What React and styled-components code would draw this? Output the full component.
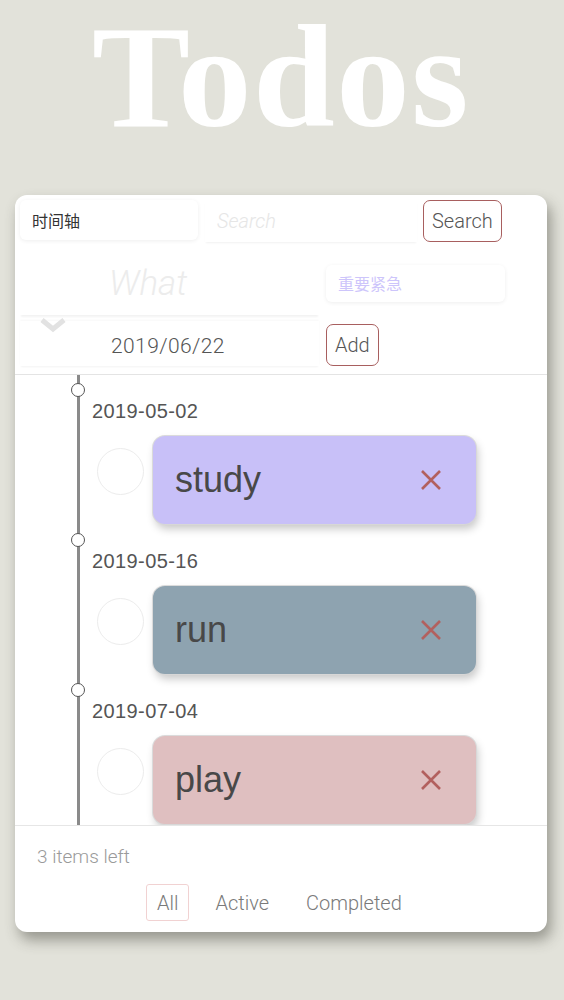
import React from "react";
import styled, { createGlobalStyle } from "styled-components";

const GlobalStyle = createGlobalStyle`
  html, body { margin: 0; padding: 0; }
  body {
    background: #e2e2da;
    font-family: "Liberation Sans", Arial, sans-serif;
  }
  * { box-sizing: border-box; }
`;

const Page = styled.div`
  min-height: 1000px;
  background: #e2e2da;
  padding-top: 1px;
`;

const Title = styled.h1`
  margin: 0;
  height: 194px;
  text-align: center;
  font-family: "Liberation Serif", "Times New Roman", serif;
  font-weight: 700;
  font-size: 147px;
  line-height: 152px;
  letter-spacing: 1.5px;
  color: #ffffff;
  padding-right: 2px;
  white-space: nowrap;
`;

const Card = styled.div`
  margin: 0 17px 0 15px;
  background: #fff;
  border-radius: 12px;
  box-shadow: 4px 8px 14px rgba(60, 60, 50, 0.45);
  overflow: hidden;
`;

const Header = styled.div`
  padding: 5px 0 8px 5px;
  display: flex;
  flex-direction: column;
  gap: 9px;
`;

const TopRow = styled.div`
  display: flex;
  align-items: flex-start;
`;

const SelectBox = styled.div`
  width: 178px;
  height: 40px;
  border-radius: 6px;
  box-shadow: 0 1px 4px rgba(0, 0, 0, 0.07);
  display: flex;
  align-items: center;
  padding-left: 12px;
  font-family: "Noto Sans CJK SC", sans-serif;
  font-size: 16px;
  color: ${(p) => p.$color || "#333"};
`;

const SearchField = styled.div`
  margin-left: 7px;
  width: 212px;
  height: 42px;
  box-shadow: 0 2px 2px -1px rgba(0, 0, 0, 0.06);
  display: flex;
  align-items: center;
  padding-left: 12px;
  font-family: Roboto, "Liberation Sans", sans-serif;
  font-weight: 300;
  font-style: italic;
  font-size: 20px;
  color: #e6e6e6;
`;

const OutlineButton = styled.div`
  margin-left: ${(p) => p.$ml || 0}px;
  height: 42px;
  padding: 0 ${(p) => p.$px || 9}px;
  border: 1px solid #a85f5f;
  border-radius: 7px;
  display: flex;
  align-items: center;
  font-family: Roboto, "Liberation Sans", sans-serif;
  font-weight: 300;
  font-size: 20px;
  color: #555;
`;

const AddGrid = styled.div`
  display: grid;
  grid-template-columns: 299px 1fr;
  grid-template-rows: 64px 45px;
  column-gap: 7px;
  row-gap: 6px;
`;

const WhatField = styled.div`
  box-shadow: 0 3px 2px -1px rgba(0, 0, 0, 0.05);
  display: flex;
  align-items: center;
  padding-left: 89px;
  font-family: Roboto, "Liberation Sans", sans-serif;
  font-weight: 300;
  font-style: italic;
  font-size: 35px;
  color: #ececec;
`;

const PriorityBox = styled(SelectBox)`
  align-self: center;
  width: 179px;
  height: 37px;
  color: #cdc5fb;
  font-size: 16px;
`;

const DateField = styled.div`
  position: relative;
  box-shadow: 0 2px 2px -1px rgba(0, 0, 0, 0.05), 0 -1px 2px rgba(0, 0, 0, 0.03);
  display: flex;
  align-items: flex-end;
  padding: 0 0 8px 91px;
  font-family: Roboto, "Liberation Sans", sans-serif;
  font-weight: 300;
  font-size: 21px;
  letter-spacing: 0.4px;
  color: #555;
`;

const Chevron = styled.svg`
  position: absolute;
  left: 20px;
  top: -4px;
`;

const AddCell = styled.div`
  display: flex;
  align-items: flex-end;
`;

const Divider = styled.div`
  height: 1px;
  background: #e4e4e4;
`;

const Timeline = styled.div`
  position: relative;
  height: 450px;
  overflow: hidden;
  &::before {
    content: "";
    position: absolute;
    left: 62px;
    top: 0;
    bottom: 0;
    width: 2.5px;
    background: #8a8a8a;
  }
`;

const Entry = styled.div`
  position: relative;
  height: 150px;
  padding: 24px 0 0 77px;
`;

const Node = styled.span`
  position: absolute;
  left: 56px;
  top: 8px;
  width: 14px;
  height: 14px;
  border-radius: 50%;
  background: #fff;
  border: 1.5px solid #555;
`;

const DateLabel = styled.div`
  font-family: "Liberation Sans", Arial, sans-serif;
  font-size: 20px;
  letter-spacing: 0.4px;
  line-height: 24px;
  color: #555;
`;

const ItemRow = styled.div`
  margin-top: 13px;
  display: flex;
  align-items: center;
  padding-left: 5px;
`;

const Check = styled.span`
  width: 47px;
  height: 47px;
  border-radius: 50%;
  border: 1px solid #ececec;
  margin-top: -18px;
`;

const TodoCard = styled.div`
  margin-left: 9px;
  width: 323px;
  height: 88px;
  border-radius: 12px;
  background: ${(p) => p.$bg};
  box-shadow: 0 0 0 1px rgba(215, 215, 215, 0.9), 2px 5px 9px rgba(0, 0, 0, 0.22);
  display: flex;
  align-items: center;
  justify-content: space-between;
  padding: 0 34px 0 22px;
  font-family: "Liberation Sans", Arial, sans-serif;
  font-size: 36px;
  color: #484848;
`;

const Footer = styled.div`
  border-top: 1px solid #e6e6e6;
  padding: 20px 0 11px 22px;
`;

const Count = styled.div`
  font-family: Roboto, "Liberation Sans", sans-serif;
  font-weight: 300;
  font-size: 19px;
  color: #9a9a9a;
  line-height: 22px;
`;

const Filters = styled.div`
  display: flex;
  align-items: center;
  margin-top: 16px;
  padding-left: 109px;
  gap: 15px;
`;

const Filter = styled.span`
  height: 37px;
  padding: 0 10px;
  display: flex;
  align-items: center;
  border: 1px solid ${(p) => (p.$active ? "#f1d2d2" : "transparent")};
  border-radius: 3px;
  font-family: Roboto, "Liberation Sans", sans-serif;
  font-weight: 300;
  font-size: 20px;
  color: #7a7a7a;
`;

const CloseIcon = () => (
  <svg width="22" height="22" viewBox="0 0 22 22">
    <path d="M2 2 L20 20 M20 2 L2 20" stroke="#b2605e" strokeWidth="2.6" />
  </svg>
);

const todos = [
  { date: "2019-05-02", text: "study", bg: "#c8c0f8" },
  { date: "2019-05-16", text: "run", bg: "#8ea3b0" },
  { date: "2019-07-04", text: "play", bg: "#dfbfc0" },
];

export default function App() {
  return (
    <Page>
      <GlobalStyle />
      <Title>Todos</Title>
      <Card>
        <Header>
          <TopRow>
            <SelectBox>时间轴</SelectBox>
            <SearchField>Search</SearchField>
            <OutlineButton $ml={6} $px={8}>Search</OutlineButton>
          </TopRow>
          <AddGrid>
            <WhatField>What</WhatField>
            <PriorityBox>重要紧急</PriorityBox>
            <DateField>
              <Chevron width="26" height="16" viewBox="0 0 26 16">
                <path d="M2 3 L13 12 L24 3" fill="none" stroke="#e2e2e2" strokeWidth="5" />
              </Chevron>
              2019/06/22
            </DateField>
            <AddCell>
              <OutlineButton $px={8}>Add</OutlineButton>
            </AddCell>
          </AddGrid>
        </Header>
        <Divider />
        <Timeline>
          {todos.map((t) => (
            <Entry key={t.date}>
              <Node />
              <DateLabel>{t.date}</DateLabel>
              <ItemRow>
                <Check />
                <TodoCard $bg={t.bg}>
                  <span>{t.text}</span>
                  <CloseIcon />
                </TodoCard>
              </ItemRow>
            </Entry>
          ))}
        </Timeline>
        <Footer>
          <Count>3 items left</Count>
          <Filters>
            <Filter $active>All</Filter>
            <Filter>Active</Filter>
            <Filter>Completed</Filter>
          </Filters>
        </Footer>
      </Card>
    </Page>
  );
}
